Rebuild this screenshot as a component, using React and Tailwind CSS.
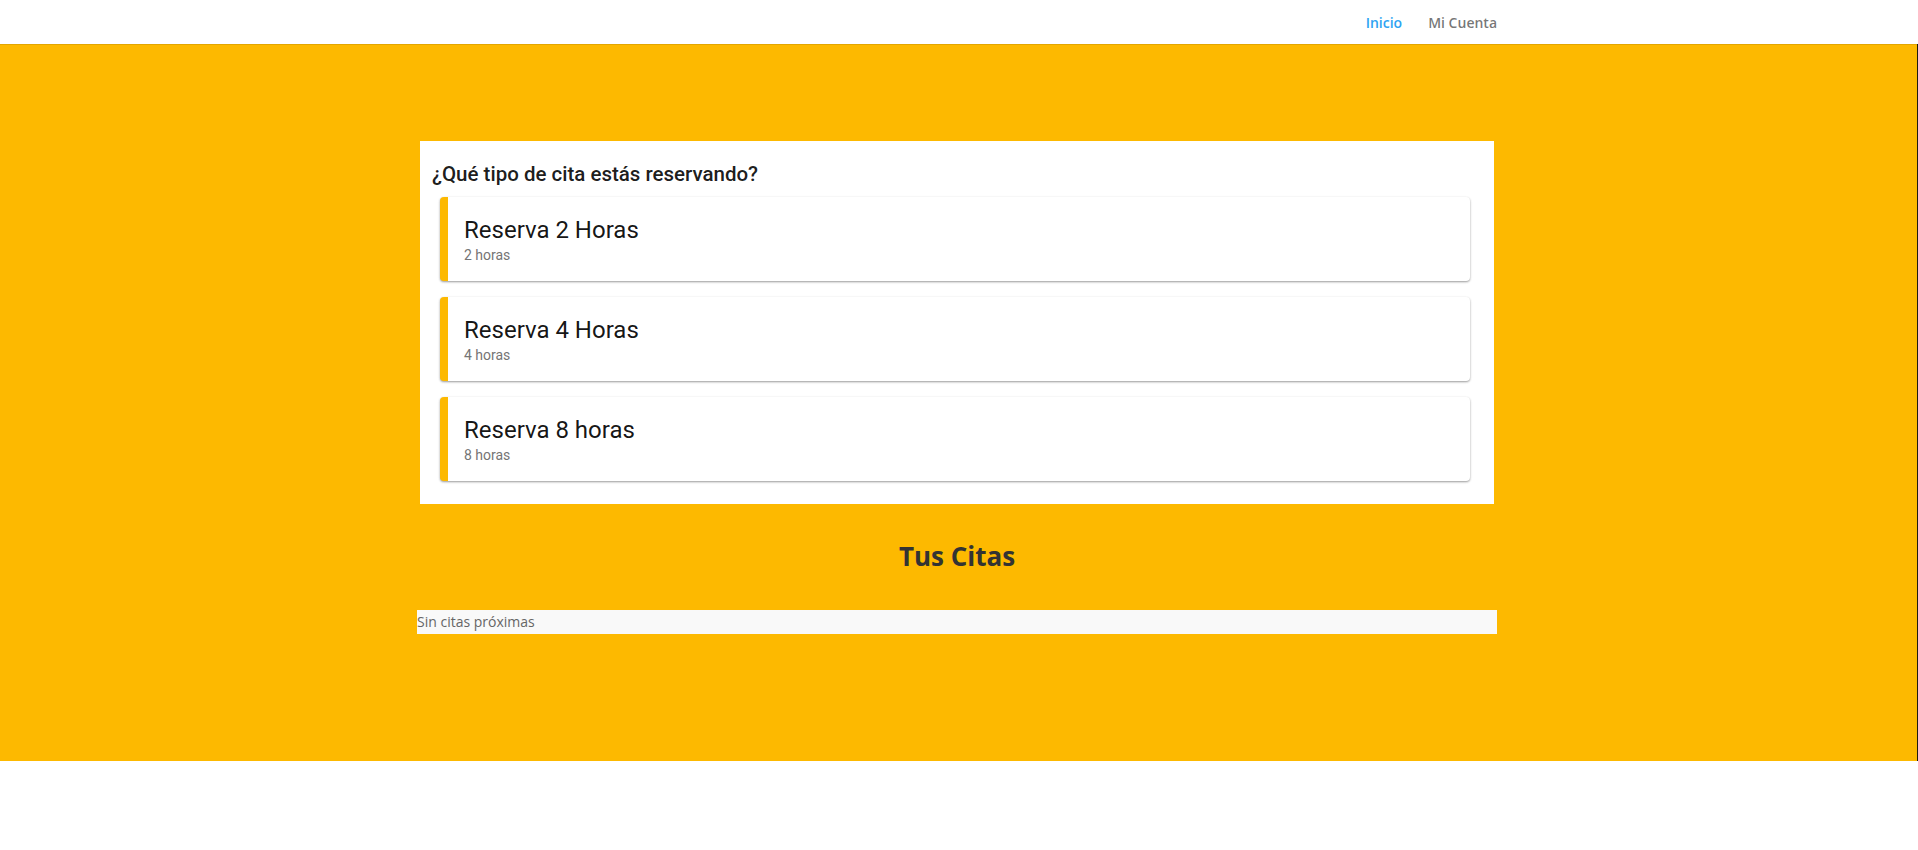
import React from "react";

const SERVICES = [
  { title: "Reserva 2 Horas", duration: "2 horas" },
  { title: "Reserva 4 Horas", duration: "4 horas" },
  { title: "Reserva 8 horas", duration: "8 horas" },
];

const ServiceCard = ({ service }) => (
  <button
    type="button"
    className="block w-full text-left bg-white rounded-[4px] border-l-[8px] border-[#fdb900] pl-4 pt-[18px] pb-4 shadow-[0_1px_3px_rgba(0,0,0,0.12),0_1px_2px_rgba(0,0,0,0.3)]"
  >
    <div className="text-[24px] leading-[30px] text-[rgba(0,0,0,0.92)]">{service.title}</div>
    <div className="text-[14px] leading-5 text-[#757575]">{service.duration}</div>
  </button>
);

export default function App() {
  return (
    <div className="min-h-screen bg-white font-['Open_Sans',sans-serif]">
      <header className="relative z-10 h-[44px] bg-white pr-[4px] shadow-[0_1px_0_rgba(0,0,0,0.1)]">
        <nav className="w-[1080px] h-full mx-auto flex justify-end items-center gap-[26px] text-[14px] font-semibold pt-[1px]">
          <a href="#" className="text-[#2ea3f2]">Inicio</a>
          <a href="#" className="text-[rgba(0,0,0,0.55)]">Mi Cuenta</a>
        </nav>
      </header>

      <main className="bg-[#fdb900] border-r border-[#1e1a10] pr-[3px] pt-[97px] pb-[127px]">
        <div className="w-[1080px] mx-auto">
          <section className="mx-[3px] bg-white pl-5 pr-6 pt-[21px] pb-[23px] font-['Roboto',sans-serif]">
            <h3 className="-ml-2 mb-[10px] text-[20.5px] leading-[25px] font-medium text-[rgba(0,0,0,0.9)]">
              ¿Qué tipo de cita estás reservando?
            </h3>
            <div className="flex flex-col gap-4">
              {SERVICES.map((s) => (
                <ServiceCard key={s.title} service={s} />
              ))}
            </div>
          </section>

          <h2 className="mt-[37px] text-center text-[26px] leading-[31px] font-bold text-[#333]">Tus Citas</h2>

          <div className="mt-[38px] h-6 bg-[#f9f9f9] text-[14px] leading-6 text-[#666]">Sin citas próximas</div>
        </div>
      </main>
    </div>
  );
}
